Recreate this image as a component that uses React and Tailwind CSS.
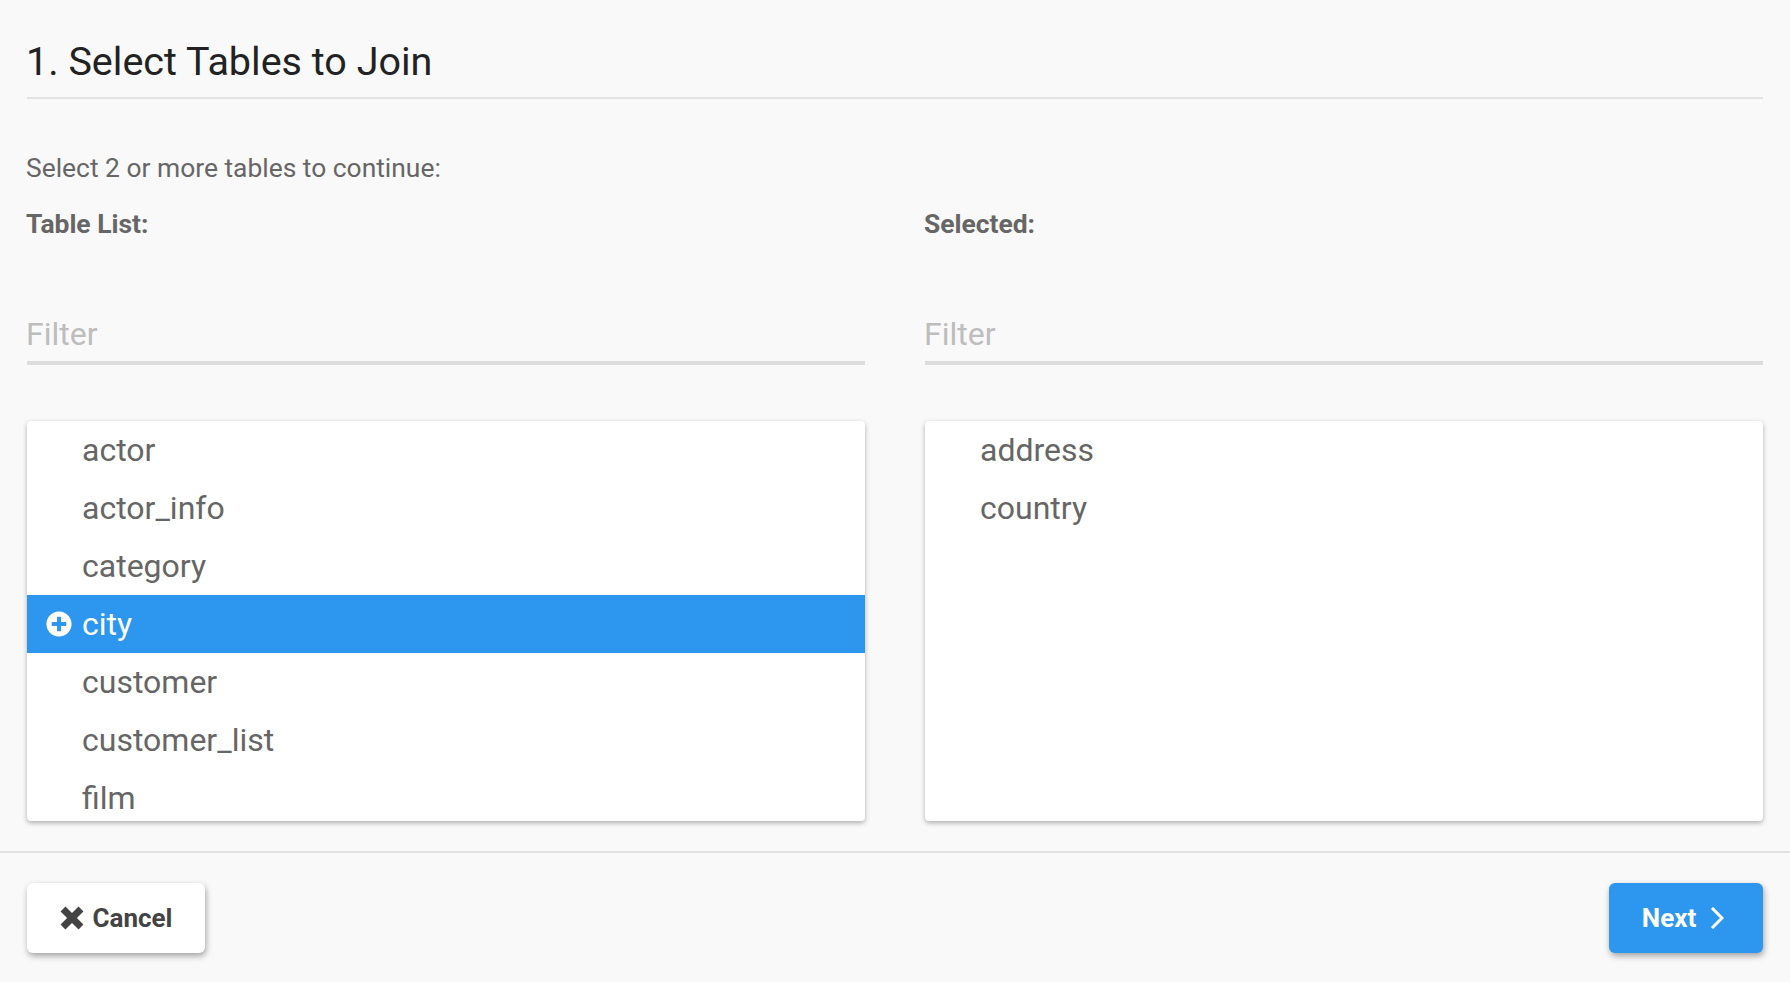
import { FaPlusCircle } from "react-icons/fa";

const tables = ["actor", "actor_info", "category", "city", "customer", "customer_list", "film"];
const selected = ["address", "country"];

function ListBox({ items, active }) {
  return (
    <div className="h-[400px] overflow-hidden rounded-[4px] bg-white shadow-[0_2px_5px_rgba(0,0,0,0.3)]">
      {items.map((name) => (
        <div
          key={name}
          className={
            name === active
              ? "flex h-[58px] items-center bg-[#2d97f0] text-white"
              : "flex h-[58px] items-center text-[#666666]"
          }
        >
          <div className="flex w-[55px] shrink-0 justify-end pr-[10px]">
            {name === active && <FaPlusCircle className="text-[26px]" />}
          </div>
          <span className="text-[32px] leading-none">{name}</span>
        </div>
      ))}
    </div>
  );
}

function Column({ label, items, active }) {
  return (
    <div className="min-w-0 flex-1">
      <div className="-ml-px h-[24px] text-[26.4px] leading-[24px] font-bold text-[#666666]">{label}</div>
      <div className="mt-[72px] flex h-[57px] items-center border-b-[4px] border-[#dddddd] pb-[2px] text-[32px] text-[#bdbdbd]">
        <span className="-ml-px">Filter</span>
      </div>
      <div className="mt-[56px]">
        <ListBox items={items} active={active} />
      </div>
    </div>
  );
}

export default function App() {
  return (
    <div className="flex h-[982px] flex-col bg-[#f9f9f9] font-['Roboto',sans-serif]">
      <div className="px-[27px]">
        <h1 className="h-[99px] border-b-2 border-[#e3e3e3] pt-[39px] text-[39.5px] leading-[46px] font-normal text-[#222222]">
          <span className="-ml-px">1. Select Tables to Join</span>
        </h1>
        <p className="mt-[54px] -ml-px text-[26.4px] leading-[30px] text-[#666666]">Select 2 or more tables to continue:</p>
        <div className="mt-[29px] flex gap-[60px]">
          <Column label="Table List:" items={tables} active="city" />
          <Column label="Selected:" items={selected} />
        </div>
      </div>
      <div className="mt-[30px] flex flex-1 items-start justify-between border-t-2 border-[#e3e3e3] px-[27px] pt-[30px]">
        <button className="flex h-[70px] w-[178px] items-center justify-center gap-[9px] rounded-[6px] bg-white text-[26px] font-bold text-[#444444] shadow-[1px_3px_6px_rgba(0,0,0,0.35)]">
          <svg width="24" height="24" viewBox="0 0 22 22" fill="currentColor">
            <path d="M5 0.5 11 6.5 17 0.5 21.5 5 15.5 11 21.5 17 17 21.5 11 15.5 5 21.5 0.5 17 6.5 11 0.5 5Z" />
          </svg>
          Cancel
        </button>
        <button className="flex h-[70px] w-[154px] items-center justify-center gap-[14px] rounded-[6px] bg-[#2d97f0] pr-[6px] text-[26px] font-bold text-white shadow-[1px_3px_6px_rgba(0,0,0,0.35)]">
          Next
          <svg width="14" height="22" viewBox="0 0 14 22" fill="none" stroke="currentColor" strokeWidth="3">
            <path d="M2 1 12 11 2 21" />
          </svg>
        </button>
      </div>
    </div>
  );
}
